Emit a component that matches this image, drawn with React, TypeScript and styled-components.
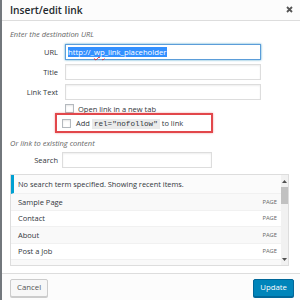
import styled, { createGlobalStyle } from 'styled-components';

const GlobalStyle = createGlobalStyle`
  html, body {
    margin: 0;
    padding: 0;
    background: #fff;
  }
  body {
    font-family: 'Open Sans', 'Noto Sans', sans-serif;
    color: #32373c;
  }
  * {
    box-sizing: border-box;
  }
`;

const Dialog = styled.div`
  width: 300px;
  height: 300px;
  background: #fff;
  border-left: 2px solid #72777c;
  display: flex;
  flex-direction: column;
  overflow: hidden;
`;

const Header = styled.div`
  height: 21px;
  flex: none;
  display: flex;
  align-items: center;
  justify-content: space-between;
  padding: 0 7px 0 8px;
  background: #fcfcfc;
  border-bottom: 1px solid #ddd;
`;

const Title = styled.h1`
  margin: 0;
  font-size: 10.2px;
  font-weight: 600;
  color: #23282d;
  line-height: 20px;
`;

const CloseButton = styled.button`
  display: flex;
  padding: 0;
  border: 0;
  background: transparent;
  width: 7px;
  height: 7px;
  margin-top: -1px;
`;

const Body = styled.div`
  flex: 1;
  padding: 0 8px;
  display: flex;
  flex-direction: column;
`;

const Hint = styled.p<{ $top: number }>`
  margin: ${(p) => p.$top}px 0 0;
  height: 12px;
  line-height: 12px;
  font-size: 7.5px;
  font-style: italic;
  color: #666;
`;

const FieldGrid = styled.div`
  margin-top: 4px;
  display: grid;
  grid-template-columns: 48px 196px;
  column-gap: 7px;
  row-gap: 4px;
`;

const Label = styled.label`
  text-align: right;
  font-size: 7.5px;
  line-height: 16px;
  color: #32373c;
`;

const Field = styled.div<{ $focused?: boolean }>`
  height: 16px;
  display: flex;
  align-items: center;
  padding: 0 2px;
  background: #fff;
  border: 1px solid ${(p) => (p.$focused ? '#5b9dd9' : '#ddd')};
  box-shadow: ${(p) => (p.$focused
    ? '0 0 2px rgba(30, 140, 190, 0.8)'
    : 'inset 0 1px 2px rgba(0, 0, 0, 0.07)')};
  font-size: 7.7px;
`;

const Selected = styled.span`
  background: #3390ff;
  color: #fff;
  line-height: 10px;
  padding-right: 1px;
`;

const Misspelt = styled.span`
  text-decoration: underline wavy #e0282e;
  text-decoration-thickness: 1px;
  text-underline-offset: 1px;
`;

const OptionRow = styled.div`
  margin: 4px 0 0 55px;
  height: 9px;
  display: flex;
  align-items: center;
  gap: 4px;
  font-size: 7.5px;
  color: #32373c;
`;

const Highlight = styled.div`
  margin: 0 0 0 45px;
  width: 158px;
  height: 20px;
  display: flex;
  align-items: center;
  gap: 5px;
  padding-left: 5px;
  border: 2px solid #e2474b;
  box-shadow: 0 0 2px rgba(226, 71, 75, 0.5);
  font-size: 7.5px;
  color: #32373c;
`;

const Checkbox = styled.span`
  flex: none;
  width: 9px;
  height: 9px;
  border: 1px solid #b4b9be;
  background: #fff;
  box-shadow: inset 0 1px 2px rgba(0, 0, 0, 0.1);
`;

const Code = styled.code`
  font-family: 'Liberation Mono', monospace;
  font-size: 7.6px;
  background: #eaeaea;
  padding: 1px 2px;
  margin: 0 2px;
`;

const SearchRow = styled.div`
  margin-top: 3px;
  display: flex;
  align-items: center;
`;

const SearchLabel = styled.label`
  width: 48px;
  text-align: right;
  font-size: 7.5px;
  margin-right: 4px;
`;

const SearchField = styled(Field)`
  width: 150px;
`;

const Results = styled.div`
  margin-top: 6px;
  height: 92px;
  width: 279px;
  border: 1px solid #ddd;
  display: flex;
  background: #fff;
`;

const ResultList = styled.div`
  flex: 1;
  overflow: hidden;
`;

const Notice = styled.div`
  height: 19px;
  display: flex;
  align-items: center;
  padding-left: 4px;
  border-left: 3px solid #00a0d2;
  background: #fbfbfb;
  font-size: 7.4px;
  color: #32373c;
  border-bottom: 1px solid #f1f1f1;
`;

const ResultRow = styled.div<{ $alt: boolean }>`
  height: 16.5px;
  flex: none;
  display: flex;
  align-items: center;
  justify-content: space-between;
  padding: 0 4px 0 7px;
  background: ${(p) => (p.$alt ? '#f9f9f9' : '#fff')};
  border-bottom: 1px solid #f1f1f1;
  font-size: 7.5px;
  color: #32373c;
`;

const ItemType = styled.span`
  font-size: 5.8px;
  text-transform: uppercase;
  color: #666;
`;

const Scrollbar = styled.div`
  width: 7px;
  flex: none;
  display: flex;
  flex-direction: column;
  background: #f1f1f1;
`;

const ScrollArrow = styled.div`
  height: 12px;
  display: flex;
  align-items: center;
  justify-content: center;
`;

const ScrollThumb = styled.div`
  height: 17px;
  background: #c1c1c1;
`;

const ScrollTrack = styled.div`
  flex: 1;
`;

const Footer = styled.div`
  height: 27px;
  flex: none;
  display: flex;
  justify-content: space-between;
  align-items: flex-start;
  padding: 5px 6px 0 8px;
  background: #fcfcfc;
  border-top: 1px solid #ddd;
`;

const Button = styled.button<{ $primary?: boolean }>`
  height: 18px;
  display: inline-flex;
  align-items: center;
  justify-content: center;
  padding: 0 6px;
  margin: 0;
  border-radius: 2px;
  font-family: 'Open Sans', 'Noto Sans', sans-serif;
  font-size: 7.8px;
  line-height: 1;
  border: 1px solid ${(p) => (p.$primary ? '#006799' : '#ccc')};
  background: ${(p) => (p.$primary ? '#0085ba' : '#f7f7f7')};
  color: ${(p) => (p.$primary ? '#fff' : '#555')};
  box-shadow: ${(p) => (p.$primary ? '0 1px 0 #006799' : '0 1px 0 #ccc')};
`;

const items = ['Sample Page', 'Contact', 'About', 'Post a Job', 'Job Dashboard'];

function Arrow({ up }: { up: boolean }) {
  return (
    <svg width="5" height="3" viewBox="0 0 5 3">
      <path d={up ? 'M0 3 L2.5 0 L5 3 Z' : 'M0 0 L2.5 3 L5 0 Z'} fill="#505050" />
    </svg>
  );
}

function App() {
  return (
    <>
      <GlobalStyle />
      <Dialog>
        <Header>
          <Title>Insert/edit link</Title>
          <CloseButton aria-label="Close">
            <svg width="7" height="7" viewBox="0 0 7 7">
              <path d="M1 1 L6 6 M6 1 L1 6" stroke="#555" strokeWidth="1.8" />
            </svg>
          </CloseButton>
        </Header>
        <Body>
          <Hint $top={7}>Enter the destination URL</Hint>
          <FieldGrid>
            <Label>URL</Label>
            <Field $focused>
              <Selected>
                http://_<Misspelt>wp</Misspelt>_link_placeholder
              </Selected>
            </Field>
            <Label>Title</Label>
            <Field />
            <Label>Link Text</Label>
            <Field />
          </FieldGrid>
          <OptionRow>
            <Checkbox />
            Open link in a new tab
          </OptionRow>
          <Highlight>
            <Checkbox />
            <span>
              Add
              <Code>rel=&quot;nofollow&quot;</Code>
              to link
            </span>
          </Highlight>
          <Hint $top={4}>Or link to existing content</Hint>
          <SearchRow>
            <SearchLabel>Search</SearchLabel>
            <SearchField />
          </SearchRow>
          <Results>
            <ResultList>
              <Notice>No search term specified. Showing recent items.</Notice>
              {items.map((item, i) => (
                <ResultRow key={item} $alt={i % 2 === 0}>
                  {item}
                  <ItemType>Page</ItemType>
                </ResultRow>
              ))}
            </ResultList>
            <Scrollbar>
              <ScrollArrow><Arrow up /></ScrollArrow>
              <ScrollThumb />
              <ScrollTrack />
              <ScrollArrow><Arrow up={false} /></ScrollArrow>
            </Scrollbar>
          </Results>
        </Body>
        <Footer>
          <Button>Cancel</Button>
          <Button $primary>Update</Button>
        </Footer>
      </Dialog>
    </>
  );
}

export default App;
